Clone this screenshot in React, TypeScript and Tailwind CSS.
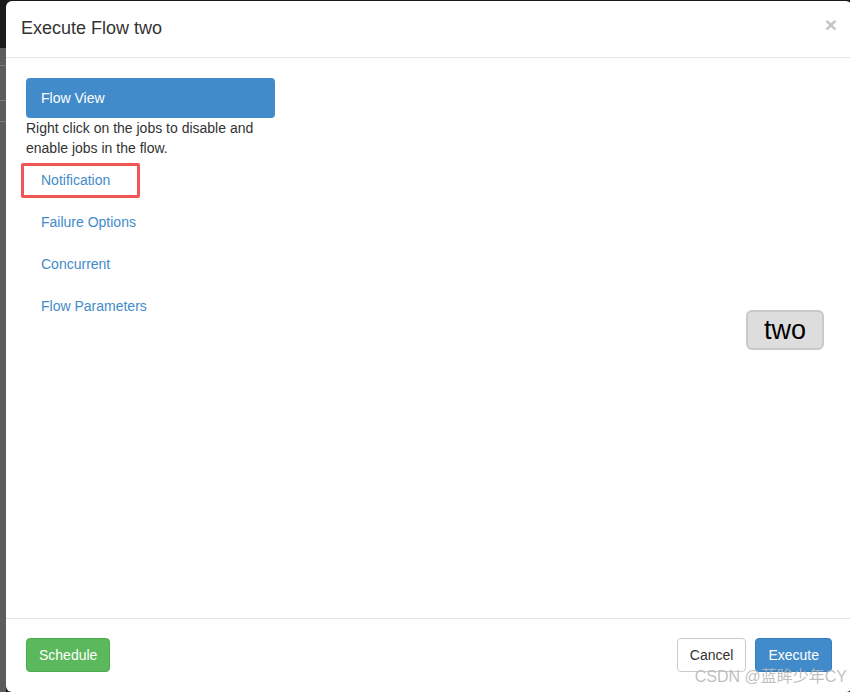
import React from 'react'

const pills = ['Notification', 'Failure Options', 'Concurrent', 'Flow Parameters']

function Pill({ label, marked }: { label: string; marked?: boolean }) {
  return (
    <div className="relative mt-[2px] h-[40px] rounded-[4px] px-[15px] py-[10px] text-[14px] leading-[20px] text-[#428bca]">
      {label}
      {marked && (
        <div className="pointer-events-none absolute left-[-5px] top-[3px] h-[35px] w-[119px] rounded-[2px] border-[3px] border-[#f25555]" />
      )}
    </div>
  )
}

export default function App() {
  return (
    <div
      className="relative flex h-[692px] w-[850px] overflow-hidden bg-[#1b1b1b]"
      style={{ fontFamily: '"Liberation Sans", Arial, sans-serif' }}
    >
      {/* backdrop strip on the left */}
      <div className="flex w-[6px] shrink-0 flex-col">
        <div className="h-[48px] bg-[#1b1b1b]" />
        <div className="flex flex-1 flex-col bg-[#5c5c5c]">
          <div className="h-[17px]" />
          <div className="h-px bg-[#7a7a7a]" />
          <div className="h-[34px]" />
          <div className="h-px bg-[#7a7a7a]" />
          <div className="h-[20px]" />
          <div className="h-px bg-[#7a7a7a]" />
        </div>
      </div>

      {/* modal */}
      <div className="mt-[1px] flex h-[691px] w-[846px] shrink-0 flex-col rounded-[6px] bg-white text-[#333]">
        <div className="flex h-[57px] items-start justify-between border-b border-[#e5e5e5] px-[15px] pt-[14px]">
          <h4 className="text-[18px] leading-[26px]">Execute Flow two</h4>
          <span className="mt-[-3px] text-[21px] font-bold leading-[26px] text-[#c4c4c4]">×</span>
        </div>

        <div className="flex flex-1 px-[20px] pt-[20px]">
          <div className="w-[249px] shrink-0">
            <div className="h-[40px] rounded-[4px] bg-[#428bca] px-[15px] py-[10px] text-[14px] leading-[20px] text-white">
              Flow View
            </div>
            <p className="text-[14px] leading-[20px] text-[#333]">
              Right click on the jobs to disable and enable jobs in the flow.
            </p>
            {pills.map((p, i) => (
              <Pill key={p} label={p} marked={i === 0} />
            ))}
          </div>
          <div className="flex flex-1 justify-end pr-[8px] pt-[232px]">
            <div className="flex h-[40px] w-[78px] items-center justify-center rounded-[6px] border-2 border-[#c9c9c9] bg-[#dddddd] text-[27px] leading-none text-black">
              two
            </div>
          </div>
        </div>

        <div className="flex h-[74px] items-start justify-between border-t border-[#e5e5e5] px-[20px] pt-[19px]">
          <button className="h-[34px] rounded-[4px] border border-[#4cae4c] bg-[#5cb85c] px-[12px] text-[14px] text-white">
            Schedule
          </button>
          <div className="flex gap-[9px]">
            <button className="h-[34px] rounded-[4px] border border-[#cccccc] bg-white px-[12px] text-[14px] text-[#333]">
              Cancel
            </button>
            <button className="h-[34px] rounded-[4px] border border-[#357ebd] bg-[#428bca] px-[12px] text-[14px] text-white">
              Execute
            </button>
          </div>
        </div>
      </div>

      {/* watermark */}
      <div
        className="pointer-events-none absolute bottom-[5px] right-[3px] text-[16px] leading-[20px] text-[#b8b8b8]/90"
        style={{ fontFamily: '"Liberation Sans", "Noto Sans CJK SC", sans-serif' }}
      >
        CSDN @蓝眸少年CY
      </div>
    </div>
  )
}
